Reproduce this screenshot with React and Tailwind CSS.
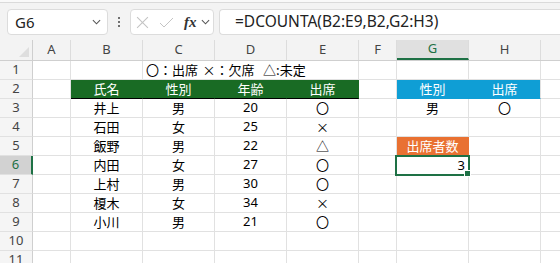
import React from 'react';

const cellFont = { fontFamily: '"Noto Sans CJK JP", "Noto Sans", sans-serif' };

const cols = [
  { k: 'A', w: 'w-[38px]' },
  { k: 'B', w: 'w-[72px]' },
  { k: 'C', w: 'w-[72px]' },
  { k: 'D', w: 'w-[72px]' },
  { k: 'E', w: 'w-[72px]' },
  { k: 'F', w: 'w-[38px]' },
  { k: 'G', w: 'w-[72px]' },
  { k: 'H', w: 'w-[72px]' },
  { k: 'I', w: 'w-[72px]' },
];

const people = [
  ['井上', '男', '20', '〇'],
  ['石田', '女', '25', '×'],
  ['飯野', '男', '22', '△'],
  ['内田', '女', '27', '〇'],
  ['上村', '男', '30', '〇'],
  ['榎木', '女', '34', '×'],
  ['小川', '男', '21', '〇'],
];

function Cell({ w, className = '', children }) {
  return (
    <div className={`${w} h-[19px] shrink-0 border-r border-b border-[#e1e1e1] flex items-center justify-center text-[13px] text-black ${className}`}>
      {children}
    </div>
  );
}

function RowHead({ n, active }) {
  return (
    <div
      className={`w-[33px] h-[19px] shrink-0 border-b border-[#e1e1e1] flex items-center justify-center text-[13px] ${active ? 'bg-[#d2d2d2] border-r-2 border-r-[#1e7145] text-[#1e7145]' : 'bg-[#f5f5f5] border-r border-r-[#cfcfcf] text-[#444]'}`}
      style={{ fontFamily: '"Noto Sans", sans-serif' }}
    >
      {n}
    </div>
  );
}

function Chevron({ className }) {
  return (
    <svg className={className} viewBox="0 0 10 6" fill="none" stroke="#555" strokeWidth="1.2">
      <path d="M1 1l4 4 4-4" />
    </svg>
  );
}

export default function App() {
  const emptyRow = (n) => (
    <div className="flex" key={n}>
      <RowHead n={n} />
      {cols.map((c) => (
        <Cell key={c.k} w={c.w} />
      ))}
    </div>
  );

  return (
    <div className="w-[560px] h-[263px] overflow-hidden bg-white" style={{ fontFamily: '"Noto Sans", sans-serif' }}>
      {/* formula bar */}
      <div className="h-[3px] bg-[#f9f9f9] border-b border-[#dadada]" />
      <div className="h-[37px] bg-[#f3f3f3] flex items-start pt-[6px] pl-[7px]">
        <div className="w-[101px] h-[26px] bg-white border border-[#dcdcdc] rounded-[4px] flex items-center justify-between pl-[7px] pr-[6px]">
          <span className="text-[15px] text-[#222]">G6</span>
          <Chevron className="w-[9px] h-[6px]" />
        </div>
        <div className="w-[22px] h-[26px] flex flex-col items-center justify-center gap-[2px]">
          <span className="w-[2px] h-[2px] bg-[#444] rounded-full" />
          <span className="w-[2px] h-[2px] bg-[#444] rounded-full" />
          <span className="w-[2px] h-[2px] bg-[#444] rounded-full" />
        </div>
        <div className="w-[84px] h-[26px] bg-white border border-[#dcdcdc] rounded-[4px] flex items-center pl-[5px]">
          <svg className="w-[13px] h-[13px]" viewBox="0 0 12 12" stroke="#c4c4c4" strokeWidth="1" fill="none">
            <path d="M1 1l10 10M11 1L1 11" />
          </svg>
          <svg className="w-[15px] h-[11px] ml-[10px]" viewBox="0 0 15 11" stroke="#c4c4c4" strokeWidth="1" fill="none">
            <path d="M1 6l4 4 9-9" />
          </svg>
          <span className="ml-[10px] text-[15px] italic font-bold text-[#333] leading-none" style={{ fontFamily: '"Liberation Serif", serif' }}>fx</span>
          <Chevron className="w-[9px] h-[6px] ml-[4px]" />
        </div>
        <div className="ml-[5px] flex-1 h-[26px] bg-white border border-[#dcdcdc] border-r-0 rounded-l-[4px] flex items-center pl-[15px]">
          <span className="text-[15.5px] text-[#222]">=DCOUNTA(B2:E9,B2,G2:H3)</span>
        </div>
      </div>

      {/* column headers */}
      <div className="flex h-[21px] bg-[#f3f3f3] border-b border-[#cfcfcf]">
        <div className="w-[33px] h-full shrink-0 border-r border-[#cfcfcf] relative">
          <svg className="absolute right-[3px] bottom-[3px] w-[10px] h-[10px]" viewBox="0 0 10 10">
            <path d="M10 0L10 10L0 10Z" fill="#dedede" />
          </svg>
        </div>
        {cols.map((c) => (
          <div
            key={c.k}
            className={`${c.w} h-full shrink-0 border-r border-[#dcdcdc] flex items-center justify-center text-[13px] ${c.k === 'G' ? 'bg-[#e0e0e0] text-[#1e7145] border-b-2 border-b-[#1e7145]' : 'text-[#444]'}`}
          >
            {c.k}
          </div>
        ))}
      </div>

      <div style={cellFont}>
        {/* row 1 */}
        <div className="flex">
          <RowHead n={1} />
          <Cell w="w-[38px]" />
          <Cell w="w-[72px]" />
          <Cell w="w-[216px]" className="justify-start pl-[3px] whitespace-pre">
            <span>〇：出席</span>
            <span className="ml-[4.5px]">×：欠席</span>
            <span className="ml-[8.5px]">△:未定</span>
          </Cell>
          <Cell w="w-[38px]" />
          <Cell w="w-[72px]" />
          <Cell w="w-[72px]" />
          <Cell w="w-[72px]" />
        </div>

        {/* row 2 */}
        <div className="flex">
          <RowHead n={2} />
          <Cell w="w-[38px]" />
          {['氏名', '性別', '年齢', '出席'].map((t) => (
            <Cell key={t} w="w-[72px]" className="bg-[#196b24] text-white border-r-[#196b24] border-b-black">{t}</Cell>
          ))}
          <Cell w="w-[38px]" />
          <Cell w="w-[72px]" className="bg-[#0f9ed5] text-white border-r-[#0f9ed5] border-b-[#0f9ed5]">性別</Cell>
          <Cell w="w-[72px]" className="bg-[#0f9ed5] text-white border-b-[#0f9ed5]">出席</Cell>
          <Cell w="w-[72px]" />
        </div>

        {/* data rows */}
        {people.map((p, i) => {
          const n = i + 3;
          return (
            <div className="flex" key={n}>
              <RowHead n={n} active={n === 6} />
              <Cell w="w-[38px]" />
              <Cell w="w-[72px]">{p[0]}</Cell>
              <Cell w="w-[72px]">{p[1]}</Cell>
              <Cell w="w-[72px]">
                <span style={{ fontFamily: '"Noto Sans", sans-serif' }}>{p[2]}</span>
              </Cell>
              <Cell w="w-[72px]">{p[3]}</Cell>
              <Cell w="w-[38px]" />
              {n === 3 && <Cell w="w-[72px]">男</Cell>}
              {n === 4 && <Cell w="w-[72px]" />}
              {n === 5 && <Cell w="w-[72px]" className="bg-[#e97132] text-white border-r-[#e97132]">出席者数</Cell>}
              {n === 6 && (
                <div className="w-[72px] h-[19px] shrink-0 border-r border-b border-[#e1e1e1] relative">
                  <div className="absolute -left-[2px] -top-[1px] w-[75px] h-[21px] border-2 border-[#1e7145] flex items-center justify-end pr-[3px] text-[13px] text-black" style={{ fontFamily: '"Noto Sans", sans-serif' }}>
                    3
                  </div>
                  <div className="absolute -right-[3px] -bottom-[3px] w-[5px] h-[5px] bg-[#1e7145] border border-white box-content" />
                </div>
              )}
              {n > 6 && <Cell w="w-[72px]" />}
              <Cell w="w-[72px]">{n === 3 ? '〇' : ''}</Cell>
              <Cell w="w-[72px]" />
            </div>
          );
        })}
        {emptyRow(10)}
        {emptyRow(11)}
      </div>
    </div>
  );
}
